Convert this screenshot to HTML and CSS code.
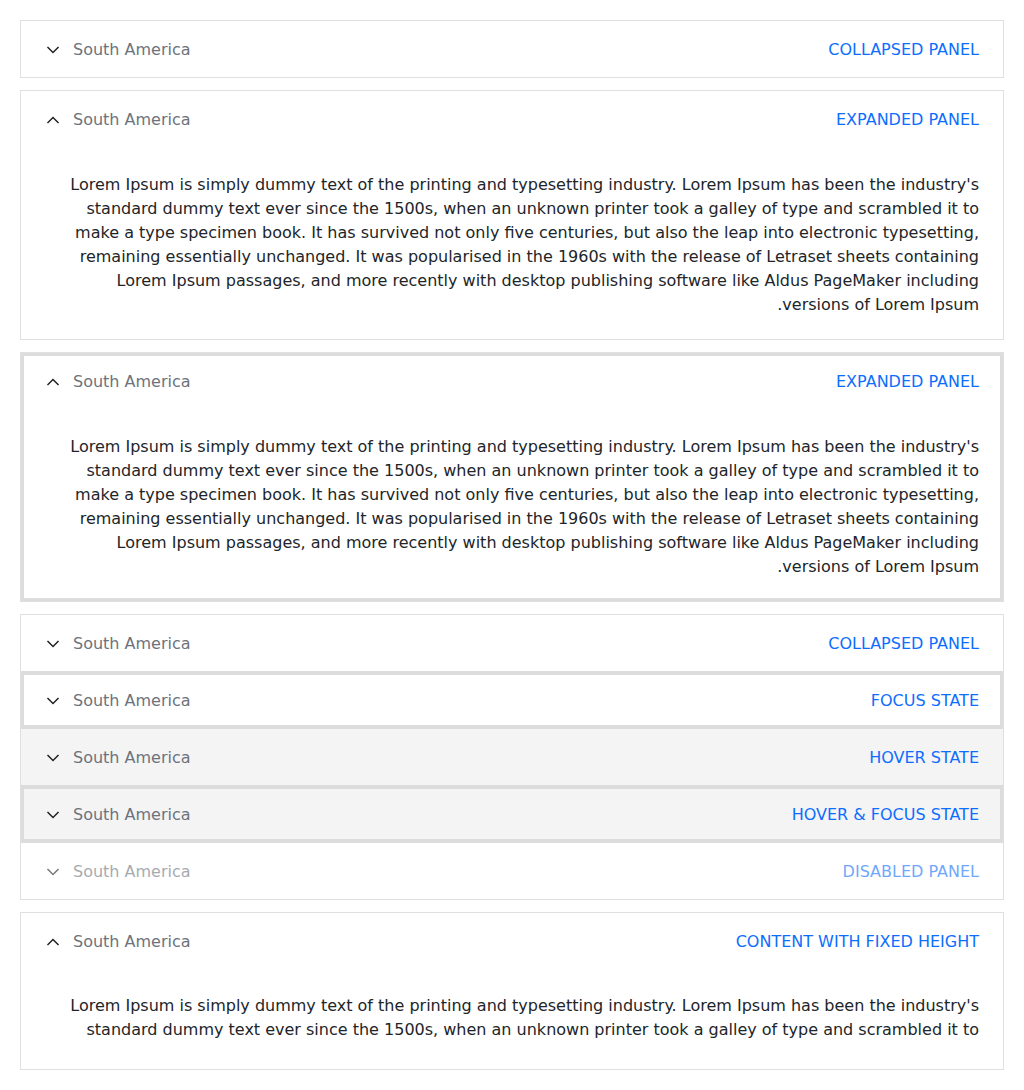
FILE: index.html
```html
<!DOCTYPE html>
<html lang="en">
<head>
<meta charset="utf-8">
<title>Accordion</title>
<link rel="stylesheet" href="styles.css">
</head>
<body>
<main class="page">

  <section class="panel">
    <div class="panel-header">
      <svg class="chevron" viewBox="0 0 16 16"><path d="M3 5.5 L8 10.5 L13 5.5"/></svg>
      <span class="title">South America</span>
      <span class="label">COLLAPSED PANEL</span>
    </div>
  </section>

  <section class="panel">
    <div class="panel-header">
      <svg class="chevron" viewBox="0 0 16 16"><path d="M3 10.5 L8 5.5 L13 10.5"/></svg>
      <span class="title">South America</span>
      <span class="label">EXPANDED PANEL</span>
    </div>
    <div class="panel-content">
      <p class="rtl-text">Lorem Ipsum is simply dummy text of the printing and typesetting industry. Lorem Ipsum has been the industry's standard dummy text ever since the 1500s, when an unknown printer took a galley of type and scrambled it to make a type specimen book. It has survived not only five centuries, but also the leap into electronic typesetting, remaining essentially unchanged. It was popularised in the 1960s with the release of Letraset sheets containing Lorem Ipsum passages, and more recently with desktop publishing software like Aldus PageMaker including versions of Lorem Ipsum.</p>
    </div>
  </section>

  <section class="panel focused">
    <div class="panel-header">
      <svg class="chevron" viewBox="0 0 16 16"><path d="M3 10.5 L8 5.5 L13 10.5"/></svg>
      <span class="title">South America</span>
      <span class="label">EXPANDED PANEL</span>
    </div>
    <div class="panel-content">
      <p class="rtl-text">Lorem Ipsum is simply dummy text of the printing and typesetting industry. Lorem Ipsum has been the industry's standard dummy text ever since the 1500s, when an unknown printer took a galley of type and scrambled it to make a type specimen book. It has survived not only five centuries, but also the leap into electronic typesetting, remaining essentially unchanged. It was popularised in the 1960s with the release of Letraset sheets containing Lorem Ipsum passages, and more recently with desktop publishing software like Aldus PageMaker including versions of Lorem Ipsum.</p>
    </div>
  </section>

  <section class="panel group">
    <div class="panel-header item">
      <svg class="chevron" viewBox="0 0 16 16"><path d="M3 5.5 L8 10.5 L13 5.5"/></svg>
      <span class="title">South America</span>
      <span class="label">COLLAPSED PANEL</span>
    </div>
    <div class="panel-header item focus">
      <svg class="chevron" viewBox="0 0 16 16"><path d="M3 5.5 L8 10.5 L13 5.5"/></svg>
      <span class="title">South America</span>
      <span class="label">FOCUS STATE</span>
    </div>
    <div class="panel-header item hover">
      <svg class="chevron" viewBox="0 0 16 16"><path d="M3 5.5 L8 10.5 L13 5.5"/></svg>
      <span class="title">South America</span>
      <span class="label">HOVER STATE</span>
    </div>
    <div class="panel-header item hover focus">
      <svg class="chevron" viewBox="0 0 16 16"><path d="M3 5.5 L8 10.5 L13 5.5"/></svg>
      <span class="title">South America</span>
      <span class="label">HOVER &amp; FOCUS STATE</span>
    </div>
    <div class="panel-header item disabled">
      <svg class="chevron" viewBox="0 0 16 16"><path d="M3 5.5 L8 10.5 L13 5.5"/></svg>
      <span class="title">South America</span>
      <span class="label">DISABLED PANEL</span>
    </div>
  </section>

  <section class="panel">
    <div class="panel-header">
      <svg class="chevron" viewBox="0 0 16 16"><path d="M3 10.5 L8 5.5 L13 10.5"/></svg>
      <span class="title">South America</span>
      <span class="label">CONTENT WITH FIXED HEIGHT</span>
    </div>
    <div class="panel-content fixed">
      <div class="fixed-inner">
        <p class="rtl-text">Lorem Ipsum is simply dummy text of the printing and typesetting industry. Lorem Ipsum has been the industry's standard dummy text ever since the 1500s, when an unknown printer took a galley of type and scrambled it to</p>
      </div>
    </div>
  </section>

</main>
</body>
</html>
```

FILE: styles.css
```css
* { box-sizing: border-box; }

html, body {
  margin: 0;
  padding: 0;
  background: #ffffff;
}

body {
  font-family: "DejaVu Sans", Verdana, sans-serif;
  font-size: 16px;
  line-height: 24px;
  color: #212529;
}

.page {
  padding: 20px;
  display: flex;
  flex-direction: column;
  gap: 12px;
}

.panel {
  border: 1px solid #e0e0e0;
  background: #ffffff;
}

.panel.focused {
  box-shadow: inset 0 0 0 3px #dcdcdc;
}

.panel-header {
  height: 56px;
  display: flex;
  align-items: center;
  padding: 2px 24px 0;
}

.chevron {
  width: 16px;
  height: 16px;
  flex: none;
  fill: none;
  stroke: #222222;
  stroke-width: 1.5;
  stroke-linecap: square;
  stroke-linejoin: miter;
  margin-top: -1px;
}

.title {
  margin-left: 12px;
  color: #6c737c;
}

.label {
  margin-left: auto;
  color: #0d6efd;
}

.panel-content {
  padding: 26px 24px 22px 48px;
}

.rtl-text {
  margin: 0;
  direction: rtl;
  text-align: right;
}

.panel-content.fixed {
  padding-top: 25px;
  padding-bottom: 25px;
}

.fixed-inner {
  height: 50px;
  overflow: hidden;
}

.group .item + .item {
  height: 57px;
  border-top: 1px solid #e0e0e0;
}

.item.hover {
  background: #f4f4f4;
}

.item.focus {
  box-shadow: inset 0 0 0 3px #dcdcdc;
}

.group .item.focus {
  border-top-color: #dcdcdc;
}

.item.focus + .item {
  border-top-color: #dcdcdc;
}

.item.disabled .chevron,
.item.disabled .title,
.item.disabled .label {
  opacity: 0.6;
}
```
